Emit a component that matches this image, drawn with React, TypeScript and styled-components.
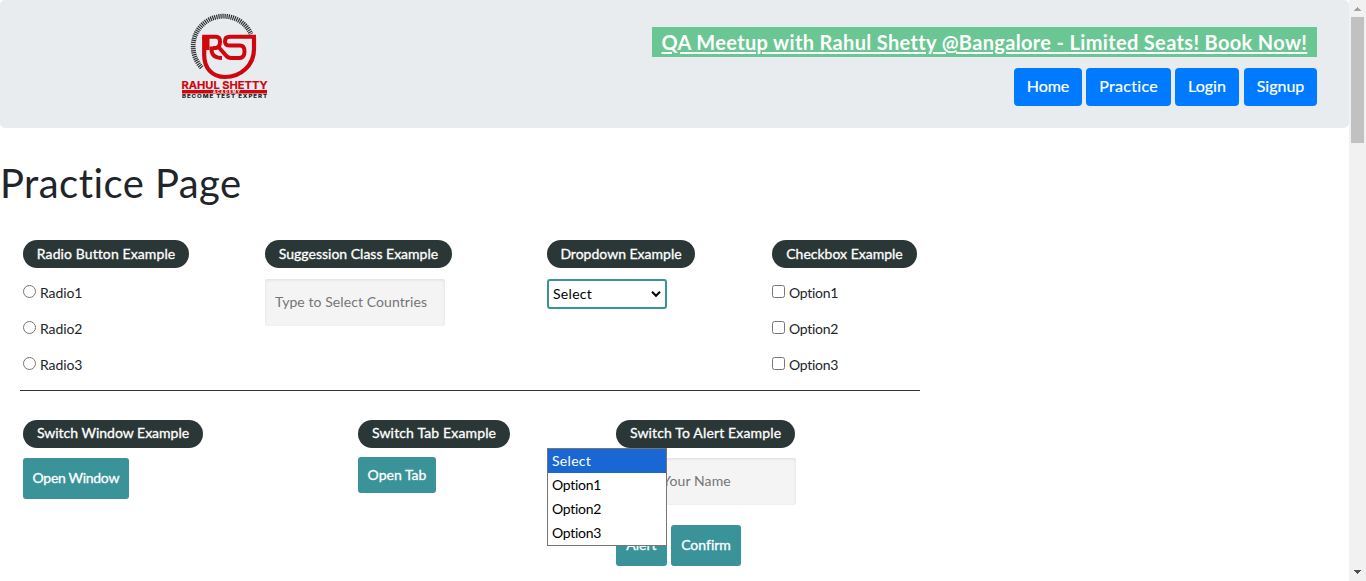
import React from "react";
import styled, { createGlobalStyle } from "styled-components";

const Global = createGlobalStyle`
  * { box-sizing: border-box; }
  html, body { margin: 0; padding: 0; overflow: hidden; }
  body {
    background: #fff;
    color: #212529;
    font: 400 14px/21px Lato, "Open Sans", sans-serif;
    font-variant-ligatures: none;
  }
`;

const Text = styled.span<{ $track?: number }>`
  letter-spacing: ${p => p.$track ?? 0}px;
  margin-right: ${p => -(p.$track ?? 0)}px;
  white-space: nowrap;
`;

const Frame = styled.div`
  display: flex;
  width: 1366px;
  height: 581px;
  overflow: hidden;
`;

const Page = styled.div`
  position: relative;
  width: 1349px;
  height: 581px;
  overflow: hidden;
`;

const Header = styled.header`
  display: flex;
  justify-content: space-between;
  height: 128px;
  padding: 12px 32px 0 180px;
  background: #e9ecef;
  border-radius: 5px;
`;

const HeaderSide = styled.div`
  display: flex;
  flex-direction: column;
  align-items: flex-end;
  gap: 11px;
  padding-top: 15px;
`;

const Banner = styled.a`
  display: flex;
  align-items: center;
  width: 665px;
  height: 30px;
  padding-left: 9.5px;
  background: #6ac692;
  color: #fff;
  font-size: 20px;
  font-weight: 700;
  text-decoration: underline;
  text-decoration-thickness: 2px;
  text-underline-offset: 2px;
  text-decoration-skip-ink: auto;
`;

const Nav = styled.nav`
  display: flex;
  gap: 4px;
`;

const NavButton = styled.button<{ $w: number }>`
  width: ${p => p.$w}px;
  height: 38px;
  padding: 0 0 2px;
  border: 0;
  border-radius: 4px;
  background: #007bff;
  color: #fff;
  font: 400 16px/24px Lato, "Open Sans", sans-serif;
  font-variant-ligatures: none;
  -webkit-text-stroke: 0.2px #fff;

  &:last-child {
    margin-left: 1px;
  }
`;

const Title = styled.h1`
  margin: 31px 0 0;
  height: 49px;
  font-size: 40px;
  font-weight: 400;
  line-height: 48px;
`;

const Row = styled.section<{ $cols: string; $top: number }>`
  display: grid;
  grid-template-columns: ${p => p.$cols};
  margin-top: ${p => p.$top}px;
  padding-left: 23px;
`;

const Column = styled.div<{ $gap?: number }>`
  display: flex;
  flex-direction: column;
  align-items: flex-start;
  gap: ${p => p.$gap ?? 11}px;
`;

const Pill = styled.div<{ $w: number; $lift?: number }>`
  display: flex;
  justify-content: center;
  align-items: center;
  width: ${p => p.$w}px;
  height: 28px;
  padding-bottom: ${p => p.$lift ?? 2}px;
  border-radius: 14px;
  background: #2b3736;
  color: #fff;
  -webkit-text-stroke: 0.3px #fff;
`;

const Choices = styled.div`
  display: flex;
  flex-direction: column;
  gap: 15px;
  padding-top: 3px;
`;

const Choice = styled.label`
  display: flex;
  align-items: flex-start;
  gap: 4px;
  height: 21px;

  input {
    width: 13px;
    height: 13px;
    margin: 3px 0 0;
  }

  span {
    line-height: 21px;
  }
`;

const Field = styled.input`
  width: 180px;
  height: 47px;
  padding: 0 10px 2px;
  border: 0;
  border-radius: 3px;
  background: #f4f4f4;
  box-shadow: inset 0 1px 3px #ddd;
  font: 400 14px/21px Lato, "Open Sans", sans-serif;
  font-variant-ligatures: none;
  letter-spacing: 0.08px;

  &::placeholder {
    color: #757575;
    opacity: 1;
  }
`;

const Select = styled.div`
  display: flex;
  justify-content: space-between;
  align-items: center;
  width: 120px;
  height: 30px;
  padding: 0 4px;
  border: 2px solid #38939a;
  border-radius: 3px;
  color: #000;

  span {
    padding-bottom: 2px;
  }
`;

const Options = styled.ul`
  position: absolute;
  left: 547px;
  top: 448px;
  width: 120px;
  height: 98px;
  margin: 0;
  padding: 0;
  border: 1px solid #767676;
  background: #fff;
  list-style: none;
`;

const Option = styled.li<{ $on?: boolean }>`
  height: 24px;
  padding-left: 4px;
  line-height: 24px;
  background: ${p => (p.$on ? "#1967d2" : "#fff")};
  color: ${p => (p.$on ? "#fff" : "#000")};
`;

const Divider = styled.hr`
  width: 900px;
  height: 1px;
  margin: 15px 0 0 20px;
  border: 0;
  background: #2b3736;
`;

const Action = styled.button<{ $w: number; $h?: number }>`
  width: ${p => p.$w}px;
  height: ${p => p.$h ?? 41}px;
  padding: 0 0 2px;
  border: 0;
  border-radius: 3px;
  background: #3a9399;
  color: #fff;
  font: 400 14px/21px Lato, "Open Sans", sans-serif;
  font-variant-ligatures: none;
  -webkit-text-stroke: 0.3px #fff;
`;

const Actions = styled.div`
  display: flex;
  gap: 4px;
  padding-top: 10px;
`;

const Scrollbar = styled.div`
  display: flex;
  flex-direction: column;
  justify-content: space-between;
  align-items: center;
  width: 17px;
  height: 581px;
  background: #f1f1f1;
`;

const Thumb = styled.div`
  width: 13px;
  height: 126px;
  margin-bottom: auto;
  background: #c1c1c1;
`;

const Arrow = ({ up }: { up?: boolean }) => (
  <svg width="17" height="17" viewBox="0 0 17 17" shapeRendering="crispEdges">
    {up ? <path d="M5 11h7v-1h-1v-1h-1v-1h-1v-1h-1v1h-1v1h-1v1h-1z" fill="#a3a3a3" />
      : <path d="M5 6h7v1h-1v1h-1v1h-1v1h-1v-1h-1v-1h-1v-1h-1z" fill="#505050" />}
  </svg>
);

const Logo = () => {
  const sans = "Inter, 'Open Sans', sans-serif";
  return (
    <svg width="90" height="90" viewBox="180 12 90 90">
      <path d="M201.700 67.600A30.300 30.300 0 0 1 223.500 16.200A30.300 30.300 0 0 1 251 33.900" fill="none" stroke="#2a2e31" strokeWidth="4.800" strokeDasharray="1.200 0.850" />
      <g fill="none" stroke="#d0060e">
        <path d="M204.200 37V55C204.200 68 212 77 225 77C241 77 254 65 254 49V37" strokeWidth="4.200" />
        <path d="M202.200 36.800H216Q220 36.800 220 42T216 48H213" strokeWidth="4" />
        <path d="M207.500 35V50" strokeWidth="4" />
        <path d="M211.500 46.500V50Q212 58 222 58" strokeWidth="4" />
        <path d="M256 36.800H229.500Q225 36.800 225 41.200T229.500 45.600H240Q244.500 45.600 244.500 51.500T240 58H231Q228 58 226 55.500L219 47.500" strokeWidth="4" />
      </g>
      <text x="181.500" y="89" textLength="86" lengthAdjust="spacingAndGlyphs" fontFamily={sans} fontSize="11" fontWeight="700" fill="#d0060e" stroke="#d0060e" strokeWidth="0.200">RAHUL SHETTY</text>
      <path d="M182 90h85v3.600h-85z" fill="#d0060e" />
      <text x="213" y="93.200" textLength="27" lengthAdjust="spacing" fontFamily={sans} fontSize="3.800" fontWeight="700" fill="#fff">ACADEMY</text>
      <text x="182" y="98.200" textLength="86" lengthAdjust="spacingAndGlyphs" fontFamily={sans} fontSize="5" fontWeight="800" letterSpacing="0.7" fill="#222">BECOME TEST EXPERT</text>
    </svg>
  );
};

const numbers = [1, 2, 3];

export default function App() {
  return (
    <Frame>
      <Global />
      <Page>
        <Header>
          <Logo />
          <HeaderSide>
            <Banner><Text $track={0.34}>QA Meetup with Rahul Shetty @Bangalore - Limited Seats! Book Now!</Text></Banner>
            <Nav>
              <NavButton $w={68}><Text $track={-0.1}>Home</Text></NavButton>
              <NavButton $w={85}><Text $track={0.3}>Practice</Text></NavButton>
              <NavButton $w={64}><Text>Login</Text></NavButton>
              <NavButton $w={73}><Text>Signup</Text></NavButton>
            </Nav>
          </HeaderSide>
        </Header>
        <Title><Text $track={0.45}>Practice Page</Text></Title>

        <Row $cols="242px 282px 225px 145px" $top={32}>
          <Column>
            <Pill $w={166}><Text $track={0.1}>Radio Button Example</Text></Pill>
            <Choices>
              {numbers.map(n => <Choice key={n}><input type="radio" name="radio" /><Text $track={-0.1}>Radio{n}</Text></Choice>)}
            </Choices>
          </Column>
          <Column>
            <Pill $w={187}><Text>Suggession Class Example</Text></Pill>
            <Field placeholder="Type to Select Countries" />
          </Column>
          <Column>
            <Pill $w={148}><Text>Dropdown Example</Text></Pill>
            <Select>
              <Text $track={0.3}>Select</Text>
              <svg width="10" height="8" viewBox="0 0 10 8"><path d="M1 1.800L5 5.800L9 1.800" fill="none" stroke="#000" strokeWidth="2" /></svg>
            </Select>
          </Column>
          <Column>
            <Pill $w={145}><Text>Checkbox Example</Text></Pill>
            <Choices>
              {numbers.map(n => <Choice key={n}><input type="checkbox" /><Text $track={-0.3}>Option{n}</Text></Choice>)}
            </Choices>
          </Column>
        </Row>
        <Divider />

        <Row $cols="335px 258px 180px" $top={29}>
          <Column $gap={10}>
            <Pill $w={180} $lift={4}><Text>Switch Window Example</Text></Pill>
            <Action $w={106}><Text $track={-0.3}>Open Window</Text></Action>
          </Column>
          <Column $gap={9}>
            <Pill $w={152} $lift={4}><Text $track={0.15}>Switch Tab Example</Text></Pill>
            <Action $w={78} $h={36}><Text>Open Tab</Text></Action>
          </Column>
          <Column $gap={10}>
            <Pill $w={179} $lift={4}><Text $track={0.15}>Switch To Alert Example</Text></Pill>
            <Field placeholder="Enter Your Name" />
            <Actions>
              <Action $w={51}><Text>Alert</Text></Action>
              <Action $w={70}><Text>Confirm</Text></Action>
            </Actions>
          </Column>
        </Row>

        <Options>
          <Option $on><Text $track={0.3}>Select</Text></Option>
          {numbers.map(n => <Option key={n}><Text $track={-0.3}>Option{n}</Text></Option>)}
        </Options>
      </Page>
      <Scrollbar>
        <Arrow up />
        <Thumb />
        <Arrow />
      </Scrollbar>
    </Frame>
  );
}
